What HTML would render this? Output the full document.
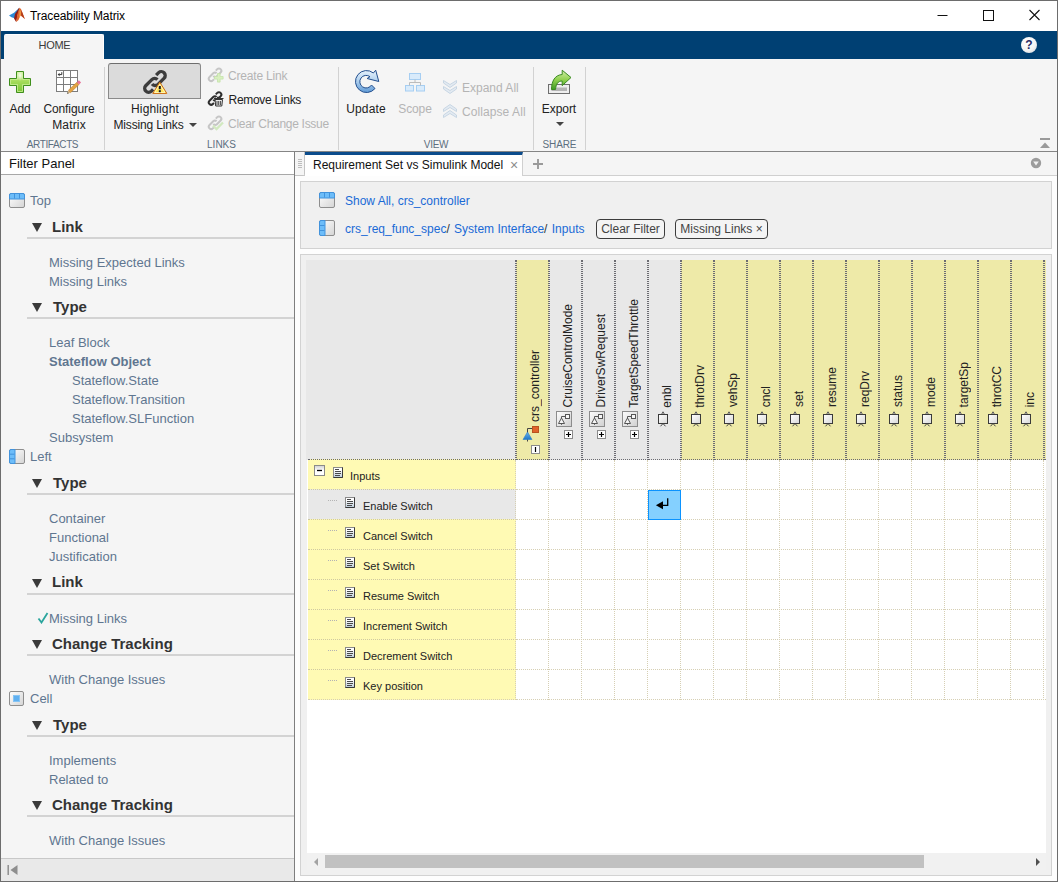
<!DOCTYPE html>
<html>
<head>
<meta charset="utf-8">
<title>Traceability Matrix</title>
<style>
*{box-sizing:border-box;margin:0;padding:0}
html,body{width:1058px;height:882px;overflow:hidden;background:#fff}
body{font-family:"Liberation Sans",sans-serif;font-size:12px;color:#222;position:relative}
.abs{position:absolute}
#win{position:absolute;left:0;top:0;width:1058px;height:882px;overflow:hidden}
#frame{position:absolute;left:0;top:0;width:1058px;height:882px;border:1px solid #6d6d6d;pointer-events:none}
/* title bar */
#title{position:absolute;left:1px;top:0;width:1056px;height:31px;background:#fff}
#title .t{position:absolute;left:29px;top:9px;font-size:12px;color:#000;white-space:nowrap;letter-spacing:-0.1px}
/* blue band */
#band{position:absolute;left:1px;top:31px;width:1056px;height:28px;background:#004073;z-index:2}
#hometab{position:absolute;left:3px;top:3px;width:100px;height:25px;background:#f5f5f5;border-top:1px solid #fff;border-right:1px solid #fff;border-radius:2px 2px 0 0;text-align:center;font-size:11px;line-height:21px;color:#3a3a3a;letter-spacing:-0.3px;padding-left:2px}
#help{position:absolute;left:1020px;top:6px;width:16px;height:16px;border-radius:8px;background:radial-gradient(circle at 40% 35%,#ffffff 0,#f4f4f4 55%,#c9ced6 100%);color:#2b2b66;font-weight:bold;font-size:12px;line-height:16px;text-align:center}
/* toolstrip */
#strip{position:absolute;left:1px;top:58px;width:1056px;height:94px;background:#f5f5f5;border-bottom:1px solid #858585}
.sep{position:absolute;top:9px;width:1px;height:83px;background:#d2d2d2}
.seclab{position:absolute;top:81px;font-size:10px;color:#5d6f80;text-align:center;white-space:nowrap}
.big{position:absolute;font-size:12px;color:#222;text-align:center;white-space:nowrap;line-height:16px}
.small{position:absolute;font-size:12px;color:#222;white-space:nowrap;line-height:16px}
.dis{color:#b4b4b4}
/* left panel */
#left{position:absolute;left:1px;top:152px;width:294px;height:729px;background:#f5f5f5;border-right:1px solid #7e7e7e}
#fphead{position:absolute;left:0;top:0;width:293px;height:23px;background:#fff;border-bottom:1px solid #a8a8a8;font-size:13px;line-height:24px;padding-left:8px;color:#111}
#fpfoot{position:absolute;left:0;top:706px;width:293px;height:23px;background:#e9e9e9;border-top:1px solid #c8c8c8}
.grp{position:absolute;left:29px;font-size:13px;color:#5f7690;white-space:nowrap}
.sec{position:absolute;left:26px;width:267px;height:27px;border-bottom:2px solid #d3d3d3}
.sec b{position:absolute;left:25px;top:6px;font-size:15px;color:#333;white-space:nowrap}
.sec i{position:absolute;left:4.5px;top:10.5px;width:0;height:0;border-left:5.5px solid transparent;border-right:5.5px solid transparent;border-top:9.5px solid #3a3a3a}
.it{position:absolute;left:48px;font-size:13px;color:#5f7690;white-space:nowrap;line-height:19px}
.it2{left:71px}
/* right */
#right{position:absolute;left:295px;top:152px;width:762px;height:729px;background:#fdfdfd}
#tabbar{position:absolute;left:0;top:0;width:762px;height:24px;background:#f5f5f5;border-bottom:1px solid #d0d0d0}
#grip{position:absolute;left:0;top:0;width:10px;height:24px;background:#f5f5f5;border-right:1px solid #c4c4c4;border-bottom:1px solid #c4c4c4;border-radius:0 0 2px 0}
#tab{position:absolute;left:10px;top:0;width:218px;height:24px;background:#fff;border-top:3px solid #0b4c8c;border-right:1px solid #d0d0d0;font-size:12px;line-height:21px;padding-left:8px;color:#111;white-space:nowrap}
#tab .x{position:absolute;left:205px;top:0px;font-size:14px;color:#8c8c8c}
#filterbox{position:absolute;left:5px;top:29px;width:752px;height:68px;background:#f0f0f0;border:1px solid #d2d2d2}
#matbox{position:absolute;left:5px;top:102px;width:752px;height:622px;background:#f0f0f0;border:1px solid #d2d2d2;overflow:hidden}
.flt{position:absolute;font-size:12px;line-height:15px;color:#333;white-space:nowrap}
.lnk{color:#1a6ad6}
.btn{position:absolute;height:20px;border:1px solid #3c3c3c;border-radius:4px;background:#f4f4f4;font-size:12px;line-height:18px;text-align:center;color:#444;white-space:nowrap}
/* matrix */
#mwhite{position:absolute;background:#fff}
#hdr{position:absolute;background:#e8e8e8}
.ch{position:absolute;width:33px;height:200px;border-left:1px dotted #6c6c72;border-right:1px dotted #6c6c72}
.ch.y{background:#eeeaa8}
.ch span{position:absolute;left:11px;bottom:52.5px;writing-mode:vertical-rl;transform:rotate(180deg);font-size:12px;color:#222;white-space:nowrap;line-height:14px}
.rh{position:absolute;width:208px;height:31px;background:#fffab4;border-top:1px dotted #cfc9a0;font-size:11px;color:#222;white-space:nowrap}
.rh.g{background:#e8e8e8}
.rh span{position:absolute;left:55px;top:10px;line-height:13px}
.rh i{position:absolute;left:20px;top:10px;width:9px;border-top:1px dotted #b4b4b4}
.vl{position:absolute;width:0;border-left:1px dotted #d6cfb4}
.hl{position:absolute;height:0;border-top:1px dotted #d6cfb4}
.hdl{position:absolute;height:0;border-top:1px dotted #6c6c72}
#sel{position:absolute;width:33px;height:30px;background:#84d0ff;border:1px solid #0b93ff}
#sb{position:absolute;background:#f1f1f1}
.vdh{position:absolute;width:0;border-left:1px dotted #6c6c72}
</style>
</head>
<body>
<div id="win">
<div id="title">
<svg class="abs" style="left:7px;top:6px" width="18" height="17" viewBox="8 6 18 17"><path d="M9 15.500L14 12.800L17.500 9.500L19 8L18.500 13L14.500 18.300L11.500 17.300Z" fill="#2b8ad6"/><path d="M14 18.500L15 14L19 8L19.500 7.700L17.500 16L16.200 22Z" fill="#8f1d18"/><path d="M16.200 22L17.300 14.500L19.500 7.700L21 9L22.500 13L25 19.300L22.500 17L20.500 15.500L18.500 20Z" fill="#e2642a"/><path d="M21.300 10L22.500 13L24.600 18.700L22.500 16.800L21.200 15.600Z" fill="#b03a1a"/><path d="M19.700 9L20.700 12L20.500 15.800L19.300 17.500Z" fill="#f0b050"/></svg>
<div class="t">Traceability Matrix</div>
<svg class="abs" style="left:936px;top:9px" width="110" height="13" viewBox="0 0 110 13"><path d="M0.500 6.500h10" stroke="#111" fill="none"/><rect x="46.500" y="1.500" width="10" height="10" stroke="#111" fill="none"/><path d="M92.500 1l10 10M102.500 1l-10 10" stroke="#111" fill="none" stroke-width="1.100"/></svg>
</div>
<div id="band"><div id="hometab">HOME</div><div id="help">?</div></div>
<div id="strip">
<!-- ARTIFACTS -->
<svg class="abs" style="left:7px;top:12px" width="24" height="24" viewBox="0 0 24 24"><defs><linearGradient id="gp" x1="0" y1="0" x2="0" y2="1"><stop offset="0" stop-color="#d6f2a0"/><stop offset="0.450" stop-color="#a6dc5c"/><stop offset="1" stop-color="#78c534"/></linearGradient><radialGradient id="gpr" cx="0.5" cy="0.300" r="0.450"><stop offset="0" stop-color="#fff" stop-opacity="0.850"/><stop offset="1" stop-color="#fff" stop-opacity="0"/></radialGradient></defs><path d="M8.500 1.500h7v7h7v7h-7v7h-7v-7h-7v-7h7z" fill="url(#gp)" stroke="#3f8f1c" stroke-width="1"/><path d="M9.500 2.500h5v7h7v5h-7v7h-5v-7h-7v-5h7z" fill="none" stroke="#c9ee96" stroke-width="1" opacity="0.800"/><rect x="8" y="2" width="8" height="12" fill="url(#gpr)"/></svg>
<svg class="abs" style="left:54px;top:11px" width="27" height="27" viewBox="0 0 27 27"><rect x="1.500" y="1.500" width="21" height="21" fill="#fff" stroke="#7d7d7d"/><path d="M8.500 1.500v21M15.500 1.500v21M1.500 8.500h21M1.500 15.500h21" stroke="#7d7d7d" fill="none"/><path d="M6.800 3.200v2.400h-2.600" stroke="#333" fill="none" stroke-width="1"/><path d="M2.600 5.600l2-1.600v3.200z" fill="#333"/><path d="M15.520 23.650L24.060 15.510L21.860 13.190L13.320 21.330Z" fill="#e3a344" stroke="#b87a2a" stroke-width="0.500"/><path d="M24.060 15.510L26.090 13.580L23.890 11.260L21.860 13.190Z" fill="#e8739a"/><path d="M12.100 24.700L15.520 23.650L13.320 21.330Z" fill="#d9b98a"/><path d="M12.100 24.700L13.800 24.180L12.700 23.020Z" fill="#333"/></svg>
<div class="big" style="letter-spacing:-0.17px;left:-1px;width:40px;top:43px">Add</div>
<div class="big" style="left:28px;width:80px;top:43px"><span style="letter-spacing:-0.09px">Configure</span><br><span style="letter-spacing:0.17px">Matrix</span></div>
<div class="seclab" style="letter-spacing:-0.39px;left:-1px;width:105px">ARTIFACTS</div>
<div class="sep" style="left:103px"></div>
<!-- LINKS -->
<div class="abs" style="left:107px;top:5px;width:93px;height:36px;background:#dbdbdb;border:1px solid #8a8a8a;border-top-color:#6e6e6e;border-radius:3px 3px 0 0"></div>
<svg class="abs" style="left:140px;top:10px" width="30" height="28" viewBox="0 0 30 28"><g fill="none" stroke="#3c3c3c" stroke-width="3.3" stroke-linecap="butt"><path d="M16.44 11.56A3.95 3.95 0 0 0 10.86 11.56L4.71 17.71A3.95 3.95 0 0 0 10.29 23.29L12.14 21.45"/><path d="M15.15 7.07L17.61 4.61A3.95 3.95 0 0 1 23.19 10.19L17.04 16.34A3.95 3.95 0 0 1 11.09 15.92"/></g><path d="M18.800 14.200l7 11.200h-14z" fill="#ffe65a" stroke="#cc6a10" stroke-width="1" stroke-linejoin="round"/><path d="M18.800 16.300l5.100 8.200h-10.200z" fill="none" stroke="#fff8c0" stroke-width="0.900"/><rect x="17.800" y="18" width="2" height="3.200" fill="#14142a"/><rect x="17.800" y="22.200" width="2" height="2" fill="#14142a"/></svg>
<div class="big" style="letter-spacing:0.13px;left:107px;width:94px;top:43px">Highlight</div>
<div class="big" style="letter-spacing:-0.14px;left:100.5px;width:94px;top:59px">Missing Links</div>
<div class="abs" style="left:188px;top:65px;width:0;height:0;border-left:4px solid transparent;border-right:4px solid transparent;border-top:4px solid #444"></div>
<!-- small link buttons -->
<svg class="abs" style="left:206px;top:9px" width="18" height="18" viewBox="0 0 18 18"><g fill="none" stroke="#c6c6c6" stroke-width="2.0" stroke-linecap="butt"><path d="M9.57 6.33A2.37 2.37 0 0 0 6.22 6.33L2.52 10.02A2.37 2.37 0 0 0 5.88 13.38L6.98 12.27"/><path d="M8.79 3.64L10.26 2.16A2.37 2.37 0 0 1 13.62 5.52L9.92 9.21A2.37 2.37 0 0 1 6.35 8.95"/></g><path d="M10.500 6.500h2.600v3h3v2.600h-3v3h-2.600v-3h-3v-2.600h3z" fill="#d9f0c0" stroke="#c4e2aa" stroke-width="0.800"/></svg>
<svg class="abs" style="left:206px;top:33px" width="18" height="18" viewBox="0 0 18 18"><g fill="none" stroke="#2e2e2e" stroke-width="2.0" stroke-linecap="butt"><path d="M9.57 6.03A2.37 2.37 0 0 0 6.22 6.03L2.52 9.72A2.37 2.37 0 0 0 5.88 13.08L6.98 11.97"/><path d="M8.79 3.34L10.26 1.86A2.37 2.37 0 0 1 13.62 5.22L9.92 8.91A2.37 2.37 0 0 1 6.35 8.65"/></g><g transform="translate(-1 -2)"><path d="M9 10.500h7.500l-0.700 6.500h-6.100z" fill="#ececec" stroke="#333" stroke-width="1"/><path d="M8 9.500h9.500M11 8.300h3.500" stroke="#333" stroke-width="1.200" fill="none"/><path d="M11 12v4M12.700 12v4M14.400 12v4" stroke="#333" stroke-width="0.900" fill="none"/></g></svg>
<svg class="abs" style="left:206px;top:57px" width="18" height="18" viewBox="0 0 18 18"><g fill="none" stroke="#c6c6c6" stroke-width="2.0" stroke-linecap="butt"><path d="M9.57 6.33A2.37 2.37 0 0 0 6.22 6.33L2.52 10.02A2.37 2.37 0 0 0 5.88 13.38L6.98 12.27"/><path d="M8.79 3.64L10.26 2.16A2.37 2.37 0 0 1 13.62 5.52L9.92 9.21A2.37 2.37 0 0 1 6.35 8.95"/></g><path d="M6 10.500l3.500 3.500l6.500-6.500" fill="none" stroke="#d2e9c0" stroke-width="2.300"/></svg>
<div class="small dis" style="letter-spacing:-0.18px;left:227px;top:10px">Create Link</div>
<div class="small" style="letter-spacing:-0.29px;left:227.5px;top:34px">Remove Links</div>
<div class="small dis" style="letter-spacing:-0.29px;left:227px;top:58px">Clear Change Issue</div>
<div class="seclab" style="letter-spacing:0px;left:104px;width:233px">LINKS</div>
<div class="sep" style="left:337px"></div>
<!-- VIEW -->
<svg class="abs" style="left:353px;top:11px" width="28" height="27" viewBox="0 0 28 27"><defs><linearGradient id="gu" x1="0" y1="0" x2="0" y2="1"><stop offset="0" stop-color="#e8f2fb"/><stop offset="0.450" stop-color="#b4d3ef"/><stop offset="1" stop-color="#5f9ad6"/></linearGradient></defs><path d="M19.400 4L21.700 1.200L24.800 12.500L13.100 9.500L16 7.700A6.300 6.300 0 1 0 17.500 16L21 19.500A11 11 0 1 1 19.400 4Z" fill="url(#gu)" stroke="#234f8e" stroke-width="1" stroke-linejoin="round"/></svg>
<div class="big" style="letter-spacing:0.17px;left:335px;width:60px;top:43px">Update</div>
<svg class="abs" style="left:403px;top:14px" width="22" height="20" viewBox="0 0 22 20"><g fill="#d9ebfb" stroke="#a6cef2" stroke-width="1"><rect x="5.500" y="1.500" width="11" height="6"/><rect x="1.500" y="13.500" width="8" height="5.500"/><rect x="12.500" y="13.500" width="8" height="5.500"/></g><path d="M11 7.500v3M5.500 13.500v-3h11v3" fill="none" stroke="#bcbcbc"/></svg>
<div class="big dis" style="letter-spacing:-0.12px;left:384px;width:60px;top:43px">Scope</div>
<svg class="abs" style="left:441px;top:21px" width="16" height="17" viewBox="0 0 16 17"><g fill="#e3eaf1" stroke="#c3d2e1" stroke-width="0.900" stroke-linejoin="round"><path d="M1.500 1.500l6.500 4l6.500-4v2.500l-6.500 4.500l-6.500-4.500z"/><path d="M1.500 7.500l6.500 4l6.500-4v2.500l-6.500 4.500l-6.500-4.500z"/></g></svg>
<svg class="abs" style="left:441px;top:45px" width="16" height="17" viewBox="0 0 16 17"><g fill="#e3eaf1" stroke="#c3d2e1" stroke-width="0.900" stroke-linejoin="round"><path d="M1.500 8.500l6.500-4l6.500 4v-2.500l-6.500-4.500l-6.500 4.500z"/><path d="M1.500 14.500l6.500-4l6.500 4v-2.500l-6.500-4.500l-6.500 4.500z"/></g></svg>
<div class="small dis" style="letter-spacing:0px;left:461px;top:22px">Expand All</div>
<div class="small dis" style="letter-spacing:0.08px;left:461px;top:46px">Collapse All</div>
<div class="seclab" style="letter-spacing:-0.25px;left:338px;width:194px">VIEW</div>
<div class="sep" style="left:532px"></div>
<!-- SHARE -->
<svg class="abs" style="left:545px;top:11px" width="27" height="26" viewBox="0 0 27 26"><defs><linearGradient id="ge" x1="0" y1="0" x2="0" y2="1"><stop offset="0" stop-color="#d2efa8"/><stop offset="0.500" stop-color="#8fd04e"/><stop offset="1" stop-color="#3f9a24"/></linearGradient></defs><rect x="2.500" y="15.500" width="21" height="9" fill="#eeeeee" stroke="#6e6e6e"/><rect x="5.500" y="18.500" width="15.500" height="3.500" fill="#b4b4b4"/><path d="M5.500 20.500C5.500 12 9 6 16.200 5.500L16.200 1.200L25 8.500L16.200 16.700L16.200 12C12 12 10 15 9.500 20.500Z" fill="url(#ge)" stroke="#3a8a22" stroke-width="1" stroke-linejoin="round"/></svg>
<div class="big" style="letter-spacing:-0.07px;left:528px;width:60px;top:43px">Export</div>
<div class="abs" style="left:555px;top:64px;width:0;height:0;border-left:4px solid transparent;border-right:4px solid transparent;border-top:4px solid #444"></div>
<div class="seclab" style="letter-spacing:-0.12px;left:533px;width:51px">SHARE</div>
<div class="sep" style="left:584px"></div>
<svg class="abs" style="left:1039px;top:80px" width="12" height="11" viewBox="0 0 12 11"><path d="M0 1h10" stroke="#9a9a9a" stroke-width="2"/><path d="M5 4.500l5 5.500h-10z" fill="#9a9a9a"/></svg>
</div>
<div id="left">
<div id="fphead">Filter Panel</div>
<svg class="abs" style="left:7px;top:40px" width="18" height="17" viewBox="0 0 18 17"><defs><linearGradient id="gi" x1="0" y1="0" x2="1" y2="1"><stop offset="0" stop-color="#ffffff"/><stop offset="1" stop-color="#d4d4d4"/></linearGradient></defs><rect x="1.500" y="1.500" width="15" height="14" rx="1.500" fill="url(#gi)" stroke="#8e8e8e"/><path d="M1.500 7V3Q1.500 1.500 3 1.500H15Q16.500 1.500 16.500 3V7Z" fill="#6dbdf9" stroke="#4293dc"/><path d="M6.500 2v4.500M11.500 2v4.500" stroke="#4293dc"/></svg><div class="grp" style="top:40.9px;left:29px">Top</div>
<div class="sec" style="top:60.0px"><i></i><b style="left:25px;top:6px">Link</b></div>
<div class="it" style="top:101.0px">Missing Expected Links</div>
<div class="it" style="top:119.7px">Missing Links</div>
<div class="sec" style="top:140.0px"><i></i><b style="left:26px;top:6px">Type</b></div>
<div class="it" style="top:181.0px">Leaf Block</div>
<div class="it" style="top:199.9px"><b>Stateflow Object</b></div>
<div class="it it2" style="top:218.8px">Stateflow.State</div>
<div class="it it2" style="top:237.8px">Stateflow.Transition</div>
<div class="it it2" style="top:256.7px">Stateflow.SLFunction</div>
<div class="it" style="top:275.6px">Subsystem</div>
<svg class="abs" style="left:7px;top:296px" width="18" height="17" viewBox="0 0 18 17"><defs><linearGradient id="gi" x1="0" y1="0" x2="1" y2="1"><stop offset="0" stop-color="#ffffff"/><stop offset="1" stop-color="#d4d4d4"/></linearGradient></defs><rect x="1.500" y="1.500" width="15" height="14" rx="1.500" fill="url(#gi)" stroke="#8e8e8e"/><path d="M7 1.500H3Q1.500 1.500 1.500 3V14Q1.500 15.5 3 15.5H7Z" fill="#6dbdf9" stroke="#4293dc"/><path d="M2 6.2h4.500M2 10.8h4.500" stroke="#4293dc"/></svg><div class="grp" style="top:296.8px;left:29px">Left</div>
<div class="sec" style="top:316.0px"><i></i><b style="left:26px;top:6px">Type</b></div>
<div class="it" style="top:356.7px">Container</div>
<div class="it" style="top:375.5px">Functional</div>
<div class="it" style="top:394.5px">Justification</div>
<div class="sec" style="top:416.0px"><i></i><b style="left:25px;top:5px">Link</b></div>
<div class="it" style="top:457.0px">Missing Links</div>
<svg class="abs" style="left:36px;top:460px" width="12" height="12" viewBox="0 0 12 12"><path d="M1.500 6.500l3 4l6-9.500" fill="none" stroke="#2aa59d" stroke-width="1.800"/></svg>
<div class="sec" style="top:477.0px"><i></i><b style="left:25px;top:6px">Change Tracking</b></div>
<div class="it" style="top:517.8px">With Change Issues</div>
<svg class="abs" style="left:7px;top:538px" width="18" height="17" viewBox="0 0 18 17"><defs><linearGradient id="gi" x1="0" y1="0" x2="1" y2="1"><stop offset="0" stop-color="#ffffff"/><stop offset="1" stop-color="#d4d4d4"/></linearGradient></defs><rect x="1.500" y="1.500" width="14" height="14" rx="1.500" fill="url(#gi)" stroke="#8e8e8e"/><rect x="5.500" y="5.500" width="6" height="6" fill="#5fb0f0" stroke="#86c4f4"/></svg><div class="grp" style="top:539.2px;left:29px">Cell</div>
<div class="sec" style="top:558.0px"><i></i><b style="left:26px;top:6px">Type</b></div>
<div class="it" style="top:598.7px">Implements</div>
<div class="it" style="top:617.5px">Related to</div>
<div class="sec" style="top:638.0px"><i></i><b style="left:25px;top:6px">Change Tracking</b></div>
<div class="it" style="top:678.6px">With Change Issues</div>
<div id="fpfoot"><svg class="abs" style="left:6px;top:5px" width="12" height="12" viewBox="0 0 12 12"><path d="M1.200 1v10" stroke="#8e8e8e" stroke-width="1.500"/><path d="M10.500 1v10l-7-5z" fill="#8e8e8e"/></svg></div>
</div>
<div id="right">
<div id="tabbar"></div>
<div id="grip"><svg class="abs" style="left:3px;top:7px" width="4" height="9" viewBox="0 0 4 9"><path d="M0 0.500h4M0 2.500h4M0 4.500h4M0 6.500h4M0 8.500h4" stroke="#bdbdbd"/></svg></div>
<div id="tab">Requirement Set vs Simulink Model<span class="x">×</span></div>
<svg class="abs" style="left:236px;top:5px" width="13" height="13" viewBox="0 0 13 13"><path d="M7 2v10M2 7h10" stroke="#9a9a9a" stroke-width="1.900"/></svg>
<svg class="abs" style="left:735px;top:5px" width="12" height="12" viewBox="0 0 12 12"><circle cx="6" cy="6" r="5.200" fill="#9c9c9c"/><path d="M3.200 4.500h5.600l-2.800 4z" fill="#f2f2f2"/></svg>
<div id="filterbox"><svg class="abs" style="left:17px;top:9px" width="18" height="18" viewBox="0 0 18 18"><defs><linearGradient id="gi" x1="0" y1="0" x2="1" y2="1"><stop offset="0" stop-color="#ffffff"/><stop offset="1" stop-color="#d4d4d4"/></linearGradient></defs><rect x="1.500" y="1.500" width="15" height="15" rx="1.500" fill="url(#gi)" stroke="#8e8e8e"/><path d="M1.500 7V3Q1.500 1.500 3 1.500H15Q16.500 1.500 16.500 3V7Z" fill="#6dbdf9" stroke="#4293dc"/><path d="M6.500 2v4.500M11.500 2v4.500" stroke="#4293dc"/></svg><svg class="abs" style="left:17px;top:37px" width="18" height="18" viewBox="0 0 18 18"><defs><linearGradient id="gi" x1="0" y1="0" x2="1" y2="1"><stop offset="0" stop-color="#ffffff"/><stop offset="1" stop-color="#d4d4d4"/></linearGradient></defs><rect x="1.500" y="1.500" width="15" height="15" rx="1.500" fill="url(#gi)" stroke="#8e8e8e"/><path d="M7 1.500H3Q1.500 1.500 1.500 3V15Q1.500 16.5 3 16.5H7Z" fill="#6dbdf9" stroke="#4293dc"/><path d="M2 6.5h4.500M2 11.5h4.500" stroke="#4293dc"/></svg><div class="flt lnk" style="left:44px;top:12px">Show All, crs_controller</div>
<div class="flt" style="left:44px;top:40px"><span class="lnk">crs_req_func_spec</span>/ <span class="lnk" style="margin-left:1px">System Interface</span>/ <span class="lnk" style="margin-left:1px">Inputs</span></div>
<div class="btn" style="left:295px;top:37px;width:69px">Clear Filter</div>
<div class="btn" style="left:374px;top:37px;width:93px">Missing Links ×</div>
</div>
<div id="matbox"><div id="mwhite" style="left:6px;top:5px;width:739px;height:593px"></div>
<div id="hdr" style="left:5px;top:5px;width:740px;height:200px"></div>
<div class="ch y" style="left:215px;top:5px"><svg class="abs" style="left:4px;top:165px" width="19" height="18" viewBox="0 0 19 18"><defs><linearGradient id="gb" x1="0" y1="0" x2="0" y2="1"><stop offset="0" stop-color="#6db4ec"/><stop offset="1" stop-color="#1f78c8"/></linearGradient></defs><path d="M6.500 8v-4.500h5" fill="none" stroke="#444"/><path d="M6.500 16.500v-3" stroke="#444"/><path d="M6.500 7l4.500 7.500h-9z" fill="url(#gb)" stroke="#2a7fc9" stroke-width="0.600"/><rect x="11.500" y="1.500" width="6" height="6" fill="#e0622a" stroke="#b9521f"/></svg><svg class="abs" style="left:14px;top:185px" width="9" height="9" viewBox="0 0 9 9"><rect x="0.500" y="0.500" width="8" height="8" fill="#fff" stroke="#8c8c8c"/><path d="M4.500 2v5" stroke="#000" stroke-width="1.200"/></svg><span style="bottom:38px">crs_controller</span></div>
<div class="ch" style="left:248px;top:5px"><svg class="abs" style="left:6px;top:151px" width="16" height="16" viewBox="0 0 16 16"><defs><linearGradient id="gs" x1="0" y1="0" x2="1" y2="1"><stop offset="0" stop-color="#fdfdfd"/><stop offset="1" stop-color="#cfcfcf"/></linearGradient></defs><rect x="0.500" y="0.500" width="15" height="15" fill="url(#gs)" stroke="#8c8c8c"/><rect x="9.500" y="3.500" width="4" height="4" fill="#f6f6f6" stroke="#555" stroke-width="1"/><path d="M2.500 12.500l3-5.500l3 5.500zM5.500 7v-1.500h4M5.500 12.500v1.300" fill="#f6f6f6" stroke="#555" stroke-width="1"/></svg><svg class="abs" style="left:14px;top:170px" width="9" height="9" viewBox="0 0 9 9"><rect x="0.500" y="0.500" width="8" height="8" fill="#fff" stroke="#8c8c8c"/><path d="M4.500 2v5M2 4.500h5" stroke="#000" stroke-width="1.200"/></svg><span>CruiseControlMode</span></div>
<div class="ch" style="left:281px;top:5px"><svg class="abs" style="left:6px;top:151px" width="16" height="16" viewBox="0 0 16 16"><defs><linearGradient id="gs" x1="0" y1="0" x2="1" y2="1"><stop offset="0" stop-color="#fdfdfd"/><stop offset="1" stop-color="#cfcfcf"/></linearGradient></defs><rect x="0.500" y="0.500" width="15" height="15" fill="url(#gs)" stroke="#8c8c8c"/><rect x="9.500" y="3.500" width="4" height="4" fill="#f6f6f6" stroke="#555" stroke-width="1"/><path d="M2.500 12.500l3-5.500l3 5.500zM5.500 7v-1.500h4M5.500 12.500v1.300" fill="#f6f6f6" stroke="#555" stroke-width="1"/></svg><svg class="abs" style="left:14px;top:170px" width="9" height="9" viewBox="0 0 9 9"><rect x="0.500" y="0.500" width="8" height="8" fill="#fff" stroke="#8c8c8c"/><path d="M4.500 2v5M2 4.500h5" stroke="#000" stroke-width="1.200"/></svg><span>DriverSwRequest</span></div>
<div class="ch" style="left:314px;top:5px"><svg class="abs" style="left:6px;top:151px" width="16" height="16" viewBox="0 0 16 16"><defs><linearGradient id="gs" x1="0" y1="0" x2="1" y2="1"><stop offset="0" stop-color="#fdfdfd"/><stop offset="1" stop-color="#cfcfcf"/></linearGradient></defs><rect x="0.500" y="0.500" width="15" height="15" fill="url(#gs)" stroke="#8c8c8c"/><rect x="9.500" y="3.500" width="4" height="4" fill="#f6f6f6" stroke="#555" stroke-width="1"/><path d="M2.500 12.500l3-5.500l3 5.500zM5.500 7v-1.500h4M5.500 12.500v1.300" fill="#f6f6f6" stroke="#555" stroke-width="1"/></svg><svg class="abs" style="left:14px;top:170px" width="9" height="9" viewBox="0 0 9 9"><rect x="0.500" y="0.500" width="8" height="8" fill="#fff" stroke="#8c8c8c"/><path d="M4.500 2v5M2 4.500h5" stroke="#000" stroke-width="1.200"/></svg><span>TargetSpeedThrottle</span></div>
<div class="ch" style="left:347px;top:5px"><svg class="abs" style="left:8px;top:151px" width="12" height="17" viewBox="0 0 12 17"><defs><linearGradient id="gpt" x1="0" y1="0" x2="1" y2="1"><stop offset="0" stop-color="#ffffff"/><stop offset="1" stop-color="#d8d8d8"/></linearGradient></defs><path d="M4.500 3.500l1.500-2.700l1.500 2.700" fill="#eee" stroke="#444" stroke-width="0.900"/><rect x="1.500" y="3.500" width="9" height="9" fill="url(#gpt)" stroke="#3a3a3a"/><path d="M3.500 15.300l2.500-2.800l2.500 2.800" fill="none" stroke="#444" stroke-width="1"/></svg><span>enbl</span></div>
<div class="ch y" style="left:380px;top:5px"><svg class="abs" style="left:8px;top:151px" width="12" height="17" viewBox="0 0 12 17"><defs><linearGradient id="gpt" x1="0" y1="0" x2="1" y2="1"><stop offset="0" stop-color="#ffffff"/><stop offset="1" stop-color="#d8d8d8"/></linearGradient></defs><path d="M4.500 3.500l1.500-2.700l1.500 2.700" fill="#eee" stroke="#444" stroke-width="0.900"/><rect x="1.500" y="3.500" width="9" height="9" fill="url(#gpt)" stroke="#3a3a3a"/><path d="M3.500 15.300l2.500-2.800l2.500 2.800" fill="none" stroke="#444" stroke-width="1"/></svg><span>throtDrv</span></div>
<div class="ch y" style="left:413px;top:5px"><svg class="abs" style="left:8px;top:151px" width="12" height="17" viewBox="0 0 12 17"><defs><linearGradient id="gpt" x1="0" y1="0" x2="1" y2="1"><stop offset="0" stop-color="#ffffff"/><stop offset="1" stop-color="#d8d8d8"/></linearGradient></defs><path d="M4.500 3.500l1.500-2.700l1.500 2.700" fill="#eee" stroke="#444" stroke-width="0.900"/><rect x="1.500" y="3.500" width="9" height="9" fill="url(#gpt)" stroke="#3a3a3a"/><path d="M3.500 15.300l2.500-2.800l2.500 2.800" fill="none" stroke="#444" stroke-width="1"/></svg><span>vehSp</span></div>
<div class="ch y" style="left:446px;top:5px"><svg class="abs" style="left:8px;top:151px" width="12" height="17" viewBox="0 0 12 17"><defs><linearGradient id="gpt" x1="0" y1="0" x2="1" y2="1"><stop offset="0" stop-color="#ffffff"/><stop offset="1" stop-color="#d8d8d8"/></linearGradient></defs><path d="M4.500 3.500l1.500-2.700l1.500 2.700" fill="#eee" stroke="#444" stroke-width="0.900"/><rect x="1.500" y="3.500" width="9" height="9" fill="url(#gpt)" stroke="#3a3a3a"/><path d="M3.500 15.300l2.500-2.800l2.500 2.800" fill="none" stroke="#444" stroke-width="1"/></svg><span>cncl</span></div>
<div class="ch y" style="left:479px;top:5px"><svg class="abs" style="left:8px;top:151px" width="12" height="17" viewBox="0 0 12 17"><defs><linearGradient id="gpt" x1="0" y1="0" x2="1" y2="1"><stop offset="0" stop-color="#ffffff"/><stop offset="1" stop-color="#d8d8d8"/></linearGradient></defs><path d="M4.500 3.500l1.500-2.700l1.500 2.700" fill="#eee" stroke="#444" stroke-width="0.900"/><rect x="1.500" y="3.500" width="9" height="9" fill="url(#gpt)" stroke="#3a3a3a"/><path d="M3.500 15.300l2.500-2.800l2.500 2.800" fill="none" stroke="#444" stroke-width="1"/></svg><span>set</span></div>
<div class="ch y" style="left:512px;top:5px"><svg class="abs" style="left:8px;top:151px" width="12" height="17" viewBox="0 0 12 17"><defs><linearGradient id="gpt" x1="0" y1="0" x2="1" y2="1"><stop offset="0" stop-color="#ffffff"/><stop offset="1" stop-color="#d8d8d8"/></linearGradient></defs><path d="M4.500 3.500l1.500-2.700l1.500 2.700" fill="#eee" stroke="#444" stroke-width="0.900"/><rect x="1.500" y="3.500" width="9" height="9" fill="url(#gpt)" stroke="#3a3a3a"/><path d="M3.500 15.300l2.500-2.800l2.500 2.800" fill="none" stroke="#444" stroke-width="1"/></svg><span>resume</span></div>
<div class="ch y" style="left:545px;top:5px"><svg class="abs" style="left:8px;top:151px" width="12" height="17" viewBox="0 0 12 17"><defs><linearGradient id="gpt" x1="0" y1="0" x2="1" y2="1"><stop offset="0" stop-color="#ffffff"/><stop offset="1" stop-color="#d8d8d8"/></linearGradient></defs><path d="M4.500 3.500l1.500-2.700l1.500 2.700" fill="#eee" stroke="#444" stroke-width="0.900"/><rect x="1.500" y="3.500" width="9" height="9" fill="url(#gpt)" stroke="#3a3a3a"/><path d="M3.500 15.300l2.500-2.800l2.500 2.800" fill="none" stroke="#444" stroke-width="1"/></svg><span>reqDrv</span></div>
<div class="ch y" style="left:578px;top:5px"><svg class="abs" style="left:8px;top:151px" width="12" height="17" viewBox="0 0 12 17"><defs><linearGradient id="gpt" x1="0" y1="0" x2="1" y2="1"><stop offset="0" stop-color="#ffffff"/><stop offset="1" stop-color="#d8d8d8"/></linearGradient></defs><path d="M4.500 3.500l1.500-2.700l1.500 2.700" fill="#eee" stroke="#444" stroke-width="0.900"/><rect x="1.500" y="3.500" width="9" height="9" fill="url(#gpt)" stroke="#3a3a3a"/><path d="M3.500 15.300l2.500-2.800l2.500 2.800" fill="none" stroke="#444" stroke-width="1"/></svg><span>status</span></div>
<div class="ch y" style="left:611px;top:5px"><svg class="abs" style="left:8px;top:151px" width="12" height="17" viewBox="0 0 12 17"><defs><linearGradient id="gpt" x1="0" y1="0" x2="1" y2="1"><stop offset="0" stop-color="#ffffff"/><stop offset="1" stop-color="#d8d8d8"/></linearGradient></defs><path d="M4.500 3.500l1.500-2.700l1.500 2.700" fill="#eee" stroke="#444" stroke-width="0.900"/><rect x="1.500" y="3.500" width="9" height="9" fill="url(#gpt)" stroke="#3a3a3a"/><path d="M3.500 15.300l2.500-2.800l2.500 2.800" fill="none" stroke="#444" stroke-width="1"/></svg><span>mode</span></div>
<div class="ch y" style="left:644px;top:5px"><svg class="abs" style="left:8px;top:151px" width="12" height="17" viewBox="0 0 12 17"><defs><linearGradient id="gpt" x1="0" y1="0" x2="1" y2="1"><stop offset="0" stop-color="#ffffff"/><stop offset="1" stop-color="#d8d8d8"/></linearGradient></defs><path d="M4.500 3.500l1.500-2.700l1.500 2.700" fill="#eee" stroke="#444" stroke-width="0.900"/><rect x="1.500" y="3.500" width="9" height="9" fill="url(#gpt)" stroke="#3a3a3a"/><path d="M3.500 15.300l2.500-2.800l2.500 2.800" fill="none" stroke="#444" stroke-width="1"/></svg><span>targetSp</span></div>
<div class="ch y" style="left:677px;top:5px"><svg class="abs" style="left:8px;top:151px" width="12" height="17" viewBox="0 0 12 17"><defs><linearGradient id="gpt" x1="0" y1="0" x2="1" y2="1"><stop offset="0" stop-color="#ffffff"/><stop offset="1" stop-color="#d8d8d8"/></linearGradient></defs><path d="M4.500 3.500l1.500-2.700l1.500 2.700" fill="#eee" stroke="#444" stroke-width="0.900"/><rect x="1.500" y="3.500" width="9" height="9" fill="url(#gpt)" stroke="#3a3a3a"/><path d="M3.500 15.300l2.500-2.800l2.500 2.800" fill="none" stroke="#444" stroke-width="1"/></svg><span>throtCC</span></div>
<div class="ch y" style="left:710px;top:5px"><svg class="abs" style="left:8px;top:151px" width="12" height="17" viewBox="0 0 12 17"><defs><linearGradient id="gpt" x1="0" y1="0" x2="1" y2="1"><stop offset="0" stop-color="#ffffff"/><stop offset="1" stop-color="#d8d8d8"/></linearGradient></defs><path d="M4.500 3.500l1.500-2.700l1.500 2.700" fill="#eee" stroke="#444" stroke-width="0.900"/><rect x="1.500" y="3.500" width="9" height="9" fill="url(#gpt)" stroke="#3a3a3a"/><path d="M3.500 15.300l2.500-2.800l2.500 2.800" fill="none" stroke="#444" stroke-width="1"/></svg><span>inc</span></div>
<div class="vdh" style="left:214px;top:5px;height:200px"></div>
<div class="ch y" style="left:743px;top:5px;width:2px;border-right:none"></div>
<div class="rh" style="left:7px;top:204px"><svg class="abs" style="left:6px;top:5px" width="11" height="11" viewBox="0 0 11 11"><defs><linearGradient id="gm" x1="0" y1="0" x2="0" y2="1"><stop offset="0" stop-color="#cfcfcf"/><stop offset="0.500" stop-color="#ffffff"/></linearGradient></defs><rect x="0.500" y="0.500" width="10" height="10" fill="url(#gm)" stroke="#8a8a8a"/><path d="M3 5.500h5" stroke="#000" stroke-width="1.300"/></svg><svg class="abs" style="left:25px;top:7px" width="11" height="12" viewBox="0 0 11 12"><defs><linearGradient id="gd" x1="0" y1="0" x2="0" y2="1"><stop offset="0.300" stop-color="#ffffff"/><stop offset="1" stop-color="#b9cad8"/></linearGradient></defs><rect x="0.500" y="0.500" width="9" height="10" fill="url(#gd)" stroke="#8a8a8a"/><path d="M9.500 0.500v10h-9" fill="none" stroke="#3a3a3a"/><path d="M2 2.500h4M2 4.500h6M2 6.500h6M2 8.500h5" stroke="#4a4a4a" stroke-width="1"/></svg><span style="left:42px">Inputs</span></div>
<div class="rh g" style="left:7px;top:234px"><i></i><svg class="abs" style="left:37px;top:7px" width="11" height="12" viewBox="0 0 11 12"><defs><linearGradient id="gd" x1="0" y1="0" x2="0" y2="1"><stop offset="0.300" stop-color="#ffffff"/><stop offset="1" stop-color="#b9cad8"/></linearGradient></defs><rect x="0.500" y="0.500" width="9" height="10" fill="url(#gd)" stroke="#8a8a8a"/><path d="M9.500 0.500v10h-9" fill="none" stroke="#3a3a3a"/><path d="M2 2.500h4M2 4.500h6M2 6.500h6M2 8.500h5" stroke="#4a4a4a" stroke-width="1"/></svg><span>Enable Switch</span></div>
<div class="rh" style="left:7px;top:264px"><i></i><svg class="abs" style="left:37px;top:7px" width="11" height="12" viewBox="0 0 11 12"><defs><linearGradient id="gd" x1="0" y1="0" x2="0" y2="1"><stop offset="0.300" stop-color="#ffffff"/><stop offset="1" stop-color="#b9cad8"/></linearGradient></defs><rect x="0.500" y="0.500" width="9" height="10" fill="url(#gd)" stroke="#8a8a8a"/><path d="M9.500 0.500v10h-9" fill="none" stroke="#3a3a3a"/><path d="M2 2.500h4M2 4.500h6M2 6.500h6M2 8.500h5" stroke="#4a4a4a" stroke-width="1"/></svg><span>Cancel Switch</span></div>
<div class="rh" style="left:7px;top:294px"><i></i><svg class="abs" style="left:37px;top:7px" width="11" height="12" viewBox="0 0 11 12"><defs><linearGradient id="gd" x1="0" y1="0" x2="0" y2="1"><stop offset="0.300" stop-color="#ffffff"/><stop offset="1" stop-color="#b9cad8"/></linearGradient></defs><rect x="0.500" y="0.500" width="9" height="10" fill="url(#gd)" stroke="#8a8a8a"/><path d="M9.500 0.500v10h-9" fill="none" stroke="#3a3a3a"/><path d="M2 2.500h4M2 4.500h6M2 6.500h6M2 8.500h5" stroke="#4a4a4a" stroke-width="1"/></svg><span>Set Switch</span></div>
<div class="rh" style="left:7px;top:324px"><i></i><svg class="abs" style="left:37px;top:7px" width="11" height="12" viewBox="0 0 11 12"><defs><linearGradient id="gd" x1="0" y1="0" x2="0" y2="1"><stop offset="0.300" stop-color="#ffffff"/><stop offset="1" stop-color="#b9cad8"/></linearGradient></defs><rect x="0.500" y="0.500" width="9" height="10" fill="url(#gd)" stroke="#8a8a8a"/><path d="M9.500 0.500v10h-9" fill="none" stroke="#3a3a3a"/><path d="M2 2.500h4M2 4.500h6M2 6.500h6M2 8.500h5" stroke="#4a4a4a" stroke-width="1"/></svg><span>Resume Switch</span></div>
<div class="rh" style="left:7px;top:354px"><i></i><svg class="abs" style="left:37px;top:7px" width="11" height="12" viewBox="0 0 11 12"><defs><linearGradient id="gd" x1="0" y1="0" x2="0" y2="1"><stop offset="0.300" stop-color="#ffffff"/><stop offset="1" stop-color="#b9cad8"/></linearGradient></defs><rect x="0.500" y="0.500" width="9" height="10" fill="url(#gd)" stroke="#8a8a8a"/><path d="M9.500 0.500v10h-9" fill="none" stroke="#3a3a3a"/><path d="M2 2.500h4M2 4.500h6M2 6.500h6M2 8.500h5" stroke="#4a4a4a" stroke-width="1"/></svg><span>Increment Switch</span></div>
<div class="rh" style="left:7px;top:384px"><i></i><svg class="abs" style="left:37px;top:7px" width="11" height="12" viewBox="0 0 11 12"><defs><linearGradient id="gd" x1="0" y1="0" x2="0" y2="1"><stop offset="0.300" stop-color="#ffffff"/><stop offset="1" stop-color="#b9cad8"/></linearGradient></defs><rect x="0.500" y="0.500" width="9" height="10" fill="url(#gd)" stroke="#8a8a8a"/><path d="M9.500 0.500v10h-9" fill="none" stroke="#3a3a3a"/><path d="M2 2.500h4M2 4.500h6M2 6.500h6M2 8.500h5" stroke="#4a4a4a" stroke-width="1"/></svg><span>Decrement Switch</span></div>
<div class="rh" style="left:7px;top:414px"><i></i><svg class="abs" style="left:37px;top:7px" width="11" height="12" viewBox="0 0 11 12"><defs><linearGradient id="gd" x1="0" y1="0" x2="0" y2="1"><stop offset="0.300" stop-color="#ffffff"/><stop offset="1" stop-color="#b9cad8"/></linearGradient></defs><rect x="0.500" y="0.500" width="9" height="10" fill="url(#gd)" stroke="#8a8a8a"/><path d="M9.500 0.500v10h-9" fill="none" stroke="#3a3a3a"/><path d="M2 2.500h4M2 4.500h6M2 6.500h6M2 8.500h5" stroke="#4a4a4a" stroke-width="1"/></svg><span>Key position</span></div>
<div class="vl" style="left:214px;top:205px;height:240px"></div>
<div class="vl" style="left:247px;top:205px;height:240px"></div>
<div class="vl" style="left:280px;top:205px;height:240px"></div>
<div class="vl" style="left:313px;top:205px;height:240px"></div>
<div class="vl" style="left:346px;top:205px;height:240px"></div>
<div class="vl" style="left:379px;top:205px;height:240px"></div>
<div class="vl" style="left:412px;top:205px;height:240px"></div>
<div class="vl" style="left:445px;top:205px;height:240px"></div>
<div class="vl" style="left:478px;top:205px;height:240px"></div>
<div class="vl" style="left:511px;top:205px;height:240px"></div>
<div class="vl" style="left:544px;top:205px;height:240px"></div>
<div class="vl" style="left:577px;top:205px;height:240px"></div>
<div class="vl" style="left:610px;top:205px;height:240px"></div>
<div class="vl" style="left:643px;top:205px;height:240px"></div>
<div class="vl" style="left:676px;top:205px;height:240px"></div>
<div class="vl" style="left:709px;top:205px;height:240px"></div>
<div class="vl" style="left:742px;top:205px;height:240px"></div>
<div class="hl" style="left:215px;top:234px;width:530px"></div>
<div class="hl" style="left:215px;top:264px;width:530px"></div>
<div class="hl" style="left:215px;top:294px;width:530px"></div>
<div class="hl" style="left:215px;top:324px;width:530px"></div>
<div class="hl" style="left:215px;top:354px;width:530px"></div>
<div class="hl" style="left:215px;top:384px;width:530px"></div>
<div class="hl" style="left:215px;top:414px;width:530px"></div>
<div class="hl" style="left:215px;top:444px;width:530px"></div>
<div class="hl" style="left:7px;top:444px;width:208px"></div>
<div class="hdl" style="left:7px;top:204px;width:738px"></div>
<div id="sel" style="left:347px;top:235px"><svg width="31" height="28" viewBox="0 0 31 28" style="display:block"><path d="M18.700 7.200v7.100h-6" fill="none" stroke="#000" stroke-width="1.300"/><path d="M6.900 14.300l7.100-4v8z" fill="#000"/></svg></div>
<div id="sb" style="left:6px;top:598px;width:739px;height:17px"><div style="position:absolute;left:18px;top:2px;width:599px;height:13px;background:#c1c1c1"></div><div class="abs" style="left:7px;top:5px;width:0;height:0;border-top:4px solid transparent;border-bottom:4px solid transparent;border-right:4px solid #a3a3a3"></div><div class="abs" style="left:729px;top:5px;width:0;height:0;border-top:4px solid transparent;border-bottom:4px solid transparent;border-left:4px solid #505050"></div></div>
</div>
</div>
<div id="frame"></div>
</div>
</body>
</html>
